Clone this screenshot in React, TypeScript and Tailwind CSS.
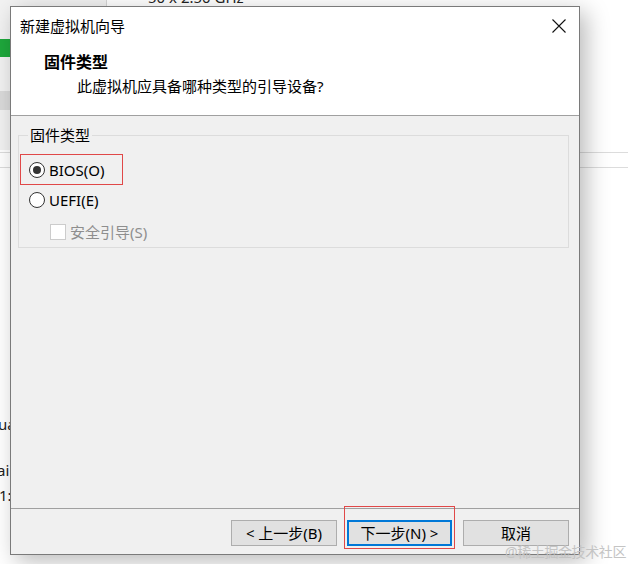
import React from "react";

const F = "font-['Noto_Sans','Noto_Sans_CJK_SC',sans-serif]";

function Radio({ checked }: { checked?: boolean }) {
  return (
    <span className="w-[16px] h-[16px] rounded-full border border-[#333333] bg-white flex items-center justify-center shrink-0">
      {checked && <span className="w-[8px] h-[8px] rounded-full bg-[#333333]" />}
    </span>
  );
}

export default function App() {
  return (
    <div className={`relative w-[628px] h-[564px] bg-white overflow-hidden ${F}`}>
      {/* background window remnants */}
      <div className="absolute left-0 top-0 w-[107px] h-[150px] bg-[#f2f2f2] border-r border-[#d6d6d6]" />
      <div className="absolute left-0 top-[39px] w-[12px] h-[18px] bg-[#1ea83c]" />
      <div className="absolute left-0 top-[91px] w-[12px] h-[19px] bg-[#dadada]" />
      <div className="absolute left-0 right-0 top-[152px] h-px bg-[#dcdcdc]" />
      <div className="absolute left-0 right-0 top-[167px] h-px bg-[#dcdcdc]" />
      <div className="absolute left-[148px] top-[-11px] text-[15px] leading-[16px] text-[#222]">50 x 2.50 GHz</div>
      <div className="absolute left-[-2px] top-[414px] text-[15px] leading-[20px] text-[#222]">ua</div>
      <div className="absolute left-[-3px] top-[460px] text-[15px] leading-[20px] text-[#222]">ai</div>
      <div className="absolute left-[-1px] top-[485px] text-[15px] leading-[20px] text-[#222]">1:</div>

      {/* dialog window */}
      <div className="absolute left-[10px] top-[6px] w-[570px] h-[549px] border border-[#7a7a7a] bg-[#f0f0f0] flex flex-col shadow-[6px_6px_22px_rgba(0,0,0,0.28)]">
        <div className="bg-white h-[37px] flex items-center justify-between pl-[9px] pr-[12px] shrink-0">
          <span className="text-[15px] text-black leading-[20px]">新建虚拟机向导</span>
          <svg width="14" height="14" viewBox="0 0 14 14" className="mr-[1px]">
            <path d="M0.5 0.5 L13.5 13.5 M13.5 0.5 L0.5 13.5" stroke="#111" strokeWidth="1.1" />
          </svg>
        </div>
        <div className="bg-white h-[72px] shrink-0 pt-[8px] border-b border-[#a0a0a0]">
          <div className="pl-[33px] text-[16px] font-bold leading-[20px] text-black">固件类型</div>
          <div className="pl-[66px] mt-[4px] text-[15px] leading-[20px] text-black">此虚拟机应具备哪种类型的引导设备?</div>
        </div>
        <div className="flex-1 px-[7px] pr-[10px] pt-[9px]">
          <fieldset className="border border-[#dcdcdc] h-[123px]">
            <legend className="ml-[9px] px-[2px] text-[15px] leading-[20px] text-black">固件类型</legend>
            <div className="mt-[9px] ml-px w-[103px] h-[31px] border border-[#e04848] flex items-center pl-[8px] gap-[4px]">
              <Radio checked />
              <span className="text-[15px] leading-[20px] text-black">BIOS(O)</span>
            </div>
            <div className="h-[30px] ml-[10px] flex items-center gap-[4px]">
              <Radio />
              <span className="text-[15px] leading-[20px] text-black">UEFI(E)</span>
            </div>
            <div className="h-[30px] ml-[31px] mt-[2px] flex items-center gap-[4px]">
              <span className="w-[16px] h-[16px] border border-[#cccccc] bg-white shrink-0" />
              <span className="text-[15px] leading-[20px] text-[#8e8e8e]">安全引导(S)</span>
            </div>
          </fieldset>
        </div>
        <div className="h-[46px] shrink-0 border-t border-[#a0a0a0] flex justify-end items-start pt-[11px] pr-[10px] gap-[10px]">
          <button className="w-[106px] h-[26px] bg-[#e1e1e1] border border-[#adadad] text-[15px] text-black leading-none">&lt; 上一步(B)</button>
          <button className="relative w-[105px] h-[26px] bg-[#e1e1e1] border-2 border-[#0078d7] text-[15px] text-black leading-none">
            下一步(N) &gt;
            <span className="absolute left-[-5px] top-[-16px] w-[111px] h-[43px] border border-[#e04848] pointer-events-none" />
          </button>
          <button className="w-[106px] h-[26px] ml-px bg-[#e1e1e1] border border-[#adadad] text-[15px] text-black leading-none">取消</button>
        </div>
      </div>

      <div className="absolute left-[505px] top-[543px] text-[14px] leading-[18px] text-[#c4c4c4] tracking-[-0.4px]">@稀土掘金技术社区</div>
    </div>
  );
}
